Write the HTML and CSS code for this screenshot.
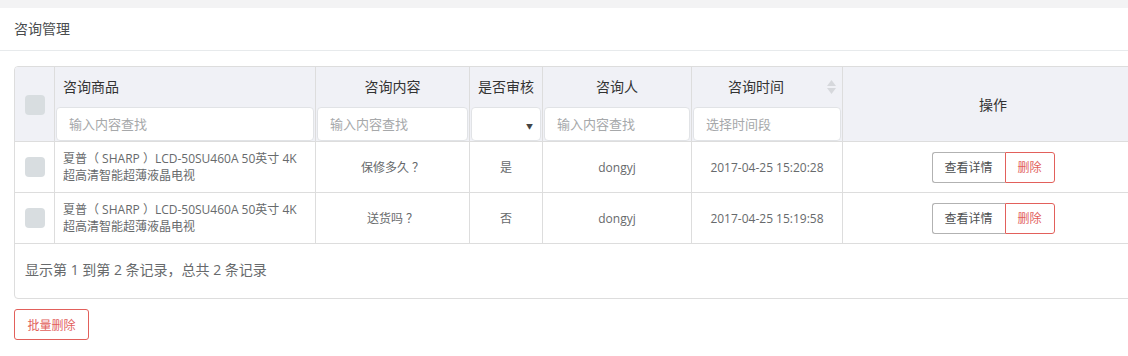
FILE: index.html
```html
<!DOCTYPE html>
<html lang="zh-CN">
<head>
    <meta charset="UTF-8">
    <meta name="viewport" content="width=device-width, initial-scale=1.0">
    <title>咨询管理</title>
    <link rel="stylesheet" href="styles.css">
</head>
<body>
    <div class="ibox">
        <div class="ibox-title">咨询管理</div>
        <div class="ibox-content">
            <div class="table-box">
                <table class="grid">
                    <colgroup>
                        <col style="width: 40px">
                        <col style="width: 261px">
                        <col style="width: 154px">
                        <col style="width: 73px">
                        <col style="width: 149px">
                        <col style="width: 151px">
                        <col style="width: 300px">
                    </colgroup>
                    <thead>
                        <tr>
                            <th class="cb-cell"><span class="cb"></span></th>
                            <th>
                                <div class="th-inner left">咨询商品</div>
                                <div class="th-filter"><input type="text" placeholder="输入内容查找"></div>
                            </th>
                            <th>
                                <div class="th-inner">咨询内容</div>
                                <div class="th-filter"><input type="text" placeholder="输入内容查找"></div>
                            </th>
                            <th>
                                <div class="th-inner">是否审核</div>
                                <div class="th-filter"><div class="fake-select"><span class="caret">▼</span></div></div>
                            </th>
                            <th>
                                <div class="th-inner">咨询人</div>
                                <div class="th-filter"><input type="text" placeholder="输入内容查找"></div>
                            </th>
                            <th>
                                <div class="th-inner sortable">咨询时间
                                    <svg class="sort" width="9" height="14" viewBox="0 0 9 14">
                                        <path d="M4.5 0 L9 6 L0 6 Z" fill="#d6d8dc"/>
                                        <path d="M4.5 14 L9 8 L0 8 Z" fill="#d6d8dc"/>
                                    </svg>
                                </div>
                                <div class="th-filter"><input type="text" placeholder="选择时间段"></div>
                            </th>
                            <th class="last">操作</th>
                        </tr>
                    </thead>
                    <tbody>
                        <tr>
                            <td class="cb-cell"><span class="cb"></span></td>
                            <td class="left">夏普（ SHARP ）LCD-50SU460A 50英寸 4K 超高清智能超薄液晶电视</td>
                            <td>保修多久 ？</td>
                            <td>是</td>
                            <td>dongyj</td>
                            <td>2017-04-25 15:20:28</td>
                            <td class="last">
                                <div class="btn-group">
                                    <button class="btn">查看详情</button><button class="btn btn-danger">删除</button>
                                </div>
                            </td>
                        </tr>
                        <tr>
                            <td class="cb-cell"><span class="cb"></span></td>
                            <td class="left">夏普（ SHARP ）LCD-50SU460A 50英寸 4K 超高清智能超薄液晶电视</td>
                            <td>送货吗 ？</td>
                            <td>否</td>
                            <td>dongyj</td>
                            <td>2017-04-25 15:19:58</td>
                            <td class="last">
                                <div class="btn-group">
                                    <button class="btn">查看详情</button><button class="btn btn-danger">删除</button>
                                </div>
                            </td>
                        </tr>
                    </tbody>
                </table>
                <div class="pagination-info">显示第 1 到第 2 条记录，总共 2 条记录</div>
            </div>
            <button class="btn btn-danger batch-btn">批量删除</button>
        </div>
    </div>
</body>
</html>
```

FILE: styles.css
```css
* {
    box-sizing: border-box;
}
body {
    margin: 0;
    background-color: #f3f3f4;
    color: #676a6c;
    font-family: 'Open Sans', 'Noto Sans CJK SC', sans-serif;
    font-size: 13px;
    overflow: hidden;
}
.ibox {
    margin-top: 8px;
    background-color: #fff;
    min-height: 348px;
}
.ibox-title {
    height: 43px;
    line-height: 42px;
    padding-left: 14px;
    border-bottom: 1px solid #e7eaec;
    font-size: 14px;
    color: #4a4c4e;
}
.ibox-content {
    padding: 15px 0 0 14px;
}
.table-box {
    width: 1130px;
    border: 1px solid #dddddd;
    border-radius: 4px;
    overflow: hidden;
}
.grid {
    table-layout: fixed;
    width: 1128px;
    border-collapse: separate;
    border-spacing: 0;
}
.grid th,
.grid td {
    border-right: 1px solid #dddddd;
    border-bottom: 1px solid #dddddd;
    text-align: center;
    vertical-align: middle;
    padding: 0;
}
.grid th.last,
.grid td.last {
    border-right: none;
}
.grid th {
    background-color: #f0f1f6;
    color: #333;
    font-size: 14px;
    font-weight: normal;
    height: 75px;
}
.th-inner {
    height: 40px;
    line-height: 40px;
    padding: 0 8px;
    position: relative;
}
.th-inner.left {
    text-align: left;
}
.th-inner.sortable {
    padding-right: 30px;
}
.sort {
    position: absolute;
    right: 6px;
    top: 13px;
}
.th-filter {
    height: 34px;
    padding: 0 1px;
}
.th-filter input,
.fake-select {
    display: block;
    width: 100%;
    height: 34px;
    border: 1px solid #e1e3e6;
    border-radius: 4px;
    background-color: #fff;
    padding: 0 12px;
    font-family: inherit;
    font-size: 13px;
    color: #676a6c;
    outline: none;
}
.th-filter input::placeholder {
    color: #a6a8aa;
}
.fake-select {
    text-align: right;
    padding-right: 7px;
    line-height: 32px;
}
.caret {
    font-size: 7px;
    color: #444;
}
.cb-cell {
    height: 50px;
}
.cb {
    display: inline-block;
    width: 20px;
    height: 20px;
    border-radius: 4px;
    background-color: #d8dde0;
    vertical-align: middle;
}
.grid td {
    height: 51px;
    font-size: 12px;
    line-height: 17px;
    color: #676a6c;
}
.grid td.left {
    text-align: left;
    padding: 0 8px;
}
.btn-group {
    display: inline-flex;
}
.btn {
    height: 31px;
    padding: 0 12px;
    border: 1px solid #b2b2b2;
    background-color: #fff;
    color: #4d4f51;
    font-family: inherit;
    font-size: 12px;
    cursor: pointer;
}
.btn-group .btn:first-child {
    border-radius: 3px 0 0 3px;
    border-right: none;
    width: 73px;
}
.btn-group .btn:last-child {
    border-radius: 0 3px 3px 0;
    width: 50px;
}
.btn-danger {
    border-color: #e2605b;
    color: #e2605b;
}
.pagination-info {
    height: 54px;
    line-height: 52px;
    padding-left: 10px;
    font-size: 14px;
    color: #676a6c;
}
.batch-btn {
    margin-top: 10px;
    width: 75px;
    border-radius: 3px;
    padding: 0;
}
```
